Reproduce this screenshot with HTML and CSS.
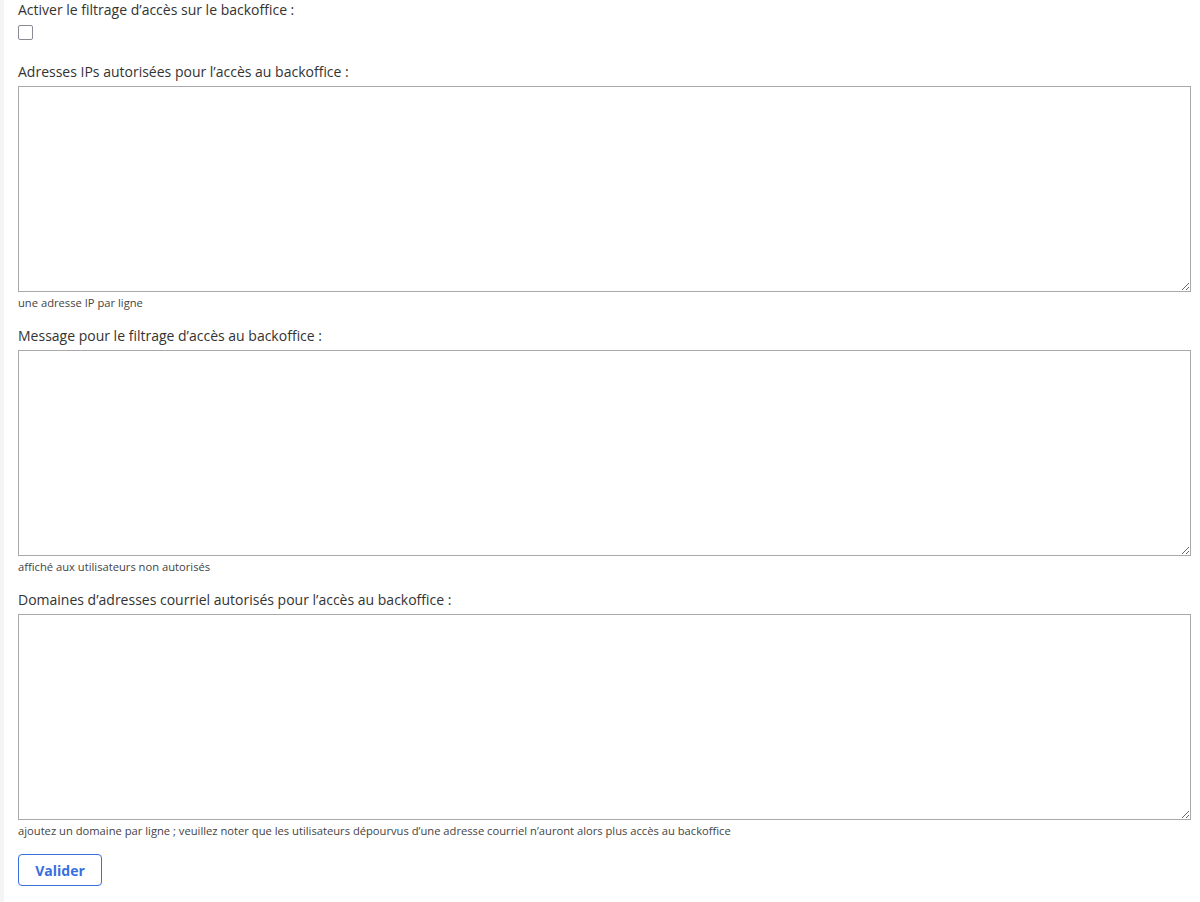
FILE: index.html
```html
<!DOCTYPE html>
<html lang="fr">
<head>
<meta charset="UTF-8">
<link rel="stylesheet" href="styles.css">
</head>
<body>
    <div class="page">
        <form class="settings-form">
            <!-- Checkbox -->
            <div class="widget widget-checkbox">
                <label class="title" for="enabled">Activer le filtrage d’accès sur le backoffice :</label>
                <input type="checkbox" id="enabled" class="check">
            </div>

            <div class="widget">
                <label class="title" for="ips">Adresses IPs autorisées pour l’accès au backoffice :</label>
                <textarea id="ips" class="area"></textarea>
                <div class="hint">une adresse IP par ligne</div>
            </div>

            <div class="widget">
                <label class="title" for="message">Message pour le filtrage d’accès au backoffice :</label>
                <textarea id="message" class="area"></textarea>
                <div class="hint">affiché aux utilisateurs non autorisés</div>
            </div>

            <div class="widget">
                <label class="title" for="domains">Domaines d’adresses courriel autorisés pour l’accès au backoffice :</label>
                <textarea id="domains" class="area"></textarea>
                <div class="hint">ajoutez un domaine par ligne ; veuillez noter que les utilisateurs dépourvus d’une adresse courriel n’auront alors plus accès au backoffice</div>
            </div>

            <div class="buttons">
                <button type="button" class="submit-button">Valider</button>
            </div>
        </form>
    </div>
</body>
</html>
```

FILE: styles.css
```css
body, html {
    margin: 0;
    padding: 0;
    font-family: "Open Sans", sans-serif;
    color: #333;
    background-color: #fff;
}

.page {
    border-left: 4px solid #f3f4f6;
    padding: 0 9px 0 14px;
    min-height: 902px;
    box-sizing: border-box;
}

.widget {
    display: flex;
    flex-direction: column;
    margin-bottom: 15px;
}

.title {
    font-size: 14px;
    line-height: 20px;
    margin-bottom: 4px;
}

/* Checkbox */
.widget-checkbox .title {
    margin-bottom: 0;
}

.check {
    appearance: none;
    width: 15px;
    height: 15px;
    margin: 5px 0 7px 0;
    border: 1px solid #8a8a94;
    border-radius: 2px;
    background-color: #fff;
}

/* Textareas */
.area {
    height: 206px;
    box-sizing: border-box;
    border: 1px solid #a9a9a9;
    border-radius: 0;
    margin: 0;
    font-family: inherit;
}

.hint {
    margin-top: 3px;
    font-size: 11.2px;
    line-height: 16px;
    color: #444;
}

/* Submit button */
.submit-button {
    width: 84px;
    height: 32px;
    padding: 0;
    font-family: inherit;
    font-size: 14px;
    font-weight: bold;
    color: #386ede;
    background-color: #fff;
    border: 1px solid #386ede;
    border-radius: 4px;
    cursor: pointer;
}
```
